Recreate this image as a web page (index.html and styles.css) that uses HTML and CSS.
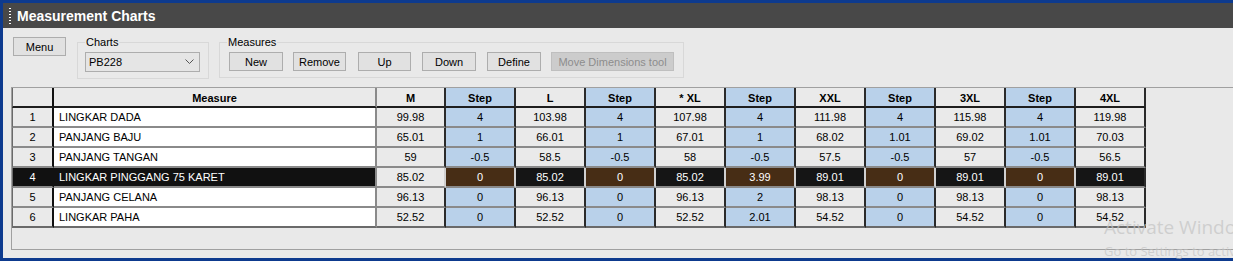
FILE: index.html
```html
<!DOCTYPE html>
<html lang="id">
<head>
  <meta charset="utf-8">
  <link rel="stylesheet" href="styles.css">
</head>
<body>
  <div class="window">
    <div class="titlebar">
      <span class="grip"></span>
      <span class="title">Measurement Charts</span>
    </div>
    <div class="content">
      <div class="toolbar">
        <button class="btn menu-btn">Menu</button>
        <fieldset class="group charts">
          <legend>Charts</legend>
          <div class="combo">
            <span>PB228</span>
            <svg width="9" height="6" viewBox="0 0 9 6"><path d="M0.5 0.5 L4.5 4.5 L8.5 0.5" fill="none" stroke="#555" stroke-width="1"/></svg>
          </div>
        </fieldset>
        <fieldset class="group measures">
          <legend>Measures</legend>
          <div class="btn-row">
            <button class="btn w54">New</button>
            <button class="btn w53 g10">Remove</button>
            <button class="btn w53 g12">Up</button>
            <button class="btn w54 g11">Down</button>
            <button class="btn w54 g11">Define</button>
            <button class="btn wide g10" disabled>Move Dimensions tool</button>
          </div>
        </fieldset>
      </div>

      <div class="grid-wrap">
        <table class="grid">
          <thead>
            <tr>
              <th class="c-no"></th>
              <th class="c-name">Measure</th>
              <th class="c-m">M</th>
              <th class="c-v step">Step</th>
              <th class="c-v">L</th>
              <th class="c-v step">Step</th>
              <th class="c-v">* XL</th>
              <th class="c-v step">Step</th>
              <th class="c-v">XXL</th>
              <th class="c-v step">Step</th>
              <th class="c-v">3XL</th>
              <th class="c-v step">Step</th>
              <th class="c-v">4XL</th>
            </tr>
          </thead>
          <tbody>
            <tr>
              <td class="no">1</td><td class="name">LINGKAR DADA</td><td class="m">99.98</td>
              <td class="step">4</td><td class="val">103.98</td><td class="step">4</td><td class="val">107.98</td>
              <td class="step">4</td><td class="val">111.98</td><td class="step">4</td><td class="val">115.98</td>
              <td class="step">4</td><td class="val">119.98</td>
            </tr>
            <tr>
              <td class="no">2</td><td class="name">PANJANG BAJU</td><td class="m">65.01</td>
              <td class="step">1</td><td class="val">66.01</td><td class="step">1</td><td class="val">67.01</td>
              <td class="step">1</td><td class="val">68.02</td><td class="step">1.01</td><td class="val">69.02</td>
              <td class="step">1.01</td><td class="val">70.03</td>
            </tr>
            <tr>
              <td class="no">3</td><td class="name">PANJANG TANGAN</td><td class="m">59</td>
              <td class="step">-0.5</td><td class="val">58.5</td><td class="step">-0.5</td><td class="val">58</td>
              <td class="step">-0.5</td><td class="val">57.5</td><td class="step">-0.5</td><td class="val">57</td>
              <td class="step">-0.5</td><td class="val">56.5</td>
            </tr>
            <tr class="selected">
              <td class="no">4</td><td class="name">LINGKAR PINGGANG 75 KARET</td><td class="m">85.02</td>
              <td class="step">0</td><td class="val">85.02</td><td class="step">0</td><td class="val">85.02</td>
              <td class="step">3.99</td><td class="val">89.01</td><td class="step">0</td><td class="val">89.01</td>
              <td class="step">0</td><td class="val">89.01</td>
            </tr>
            <tr>
              <td class="no">5</td><td class="name">PANJANG CELANA</td><td class="m">96.13</td>
              <td class="step">0</td><td class="val">96.13</td><td class="step">0</td><td class="val">96.13</td>
              <td class="step">2</td><td class="val">98.13</td><td class="step">0</td><td class="val">98.13</td>
              <td class="step">0</td><td class="val">98.13</td>
            </tr>
            <tr>
              <td class="no">6</td><td class="name">LINGKAR PAHA</td><td class="m">52.52</td>
              <td class="step">0</td><td class="val">52.52</td><td class="step">0</td><td class="val">52.52</td>
              <td class="step">2.01</td><td class="val">54.52</td><td class="step">0</td><td class="val">54.52</td>
              <td class="step">0</td><td class="val">54.52</td>
            </tr>
          </tbody>
        </table>
      </div>
    </div>
  </div>

  <div class="watermark">
    <div class="wm-big">Activate Windows</div>
    <div class="wm-small">Go to Settings to activate Windows.</div>
  </div>
</body>
</html>
```

FILE: styles.css
```css
html, body {
  margin: 0;
  padding: 0;
}
body {
  width: 1233px;
  height: 261px;
  overflow: hidden;
  background-color: #0d3a8e;
  font-family: "Liberation Sans", Arial, sans-serif;
  font-size: 11px;
  color: #000;
  position: relative;
}
.window {
  margin: 3px 0 0 3px;
  height: 255px;
  display: flex;
  flex-direction: column;
  background-color: #e9e9e9;
}
.titlebar {
  height: 25px;
  background-color: #484848;
  display: flex;
  align-items: center;
  flex-shrink: 0;
}
.grip {
  width: 2px;
  height: 16px;
  margin-left: 6px;
  margin-right: 6px;
  background-image: linear-gradient(#fff 50%, transparent 50%);
  background-size: 2px 3px;
}
.title {
  color: #fff;
  font-weight: bold;
  font-size: 14px;
}
.content {
  flex: 1;
  display: flex;
  flex-direction: column;
}
.toolbar {
  display: flex;
  align-items: flex-start;
  padding: 8px 0 0 10px;
  height: 44px;
}
.btn {
  font-family: "Liberation Sans", Arial, sans-serif;
  font-size: 11px;
  height: 19px;
  padding: 0;
  margin: 0;
  border: 1px solid #adadad;
  background-color: #e1e1e1;
  color: #000;
}
.btn:disabled {
  background-color: #cccccc;
  border-color: #bfbfbf;
  color: #8d8d8d;
}
.menu-btn {
  width: 53px;
  margin-top: 1px;
}
.group {
  margin: 0;
  padding: 3px 8px 6px 7px;
  border: 1px solid #d8d8d8;
  min-width: 0;
}
.group legend {
  padding: 0 1px;
  margin-left: 0;
  font-size: 11px;
  line-height: 13px;
}
.charts {
  margin-left: 11px;
  width: 115px;
}
.measures {
  margin-left: 10px;
  padding-left: 9px;
  padding-right: 9px;
}
.measures legend {
  margin-left: -2px;
}
.combo {
  height: 18px;
  border: 1px solid #adadad;
  background-color: #e5e5e5;
  display: flex;
  align-items: center;
  justify-content: space-between;
  padding: 0 5px 0 3px;
}
.btn-row {
  display: flex;
}
.w53 { width: 53px; }
.w54 { width: 54px; }
.wide { width: 123px; }
.g10 { margin-left: 10px; }
.g11 { margin-left: 11px; }
.g12 { margin-left: 12px; }

.grid-wrap {
  margin: 7px 0 0 8px;
  height: 161px;
  border: 1px solid #a0a0a0;
  border-right: none;
}
.grid {
  border-collapse: separate;
  border-spacing: 0;
  table-layout: fixed;
  width: 1134px;
}
.grid th, .grid td {
  box-sizing: border-box;
  padding: 0;
  height: 20px;
  line-height: 14px;
  vertical-align: top;
  padding-top: 2px;
  text-align: center;
  white-space: nowrap;
  overflow: hidden;
  border-right: 2px solid #2a2a2a;
  border-bottom: 2px solid #8a8a8a;
  background-color: #eaeaea;
}
.grid th {
  font-weight: bold;
  border-bottom-color: #1e1e1e;
  padding-top: 3px;
}
.grid th.step, .grid td.step {
  background-color: #b9d1ea;
}
.c-no { width: 42px; }
.c-name { width: 323px; }
.c-m { width: 69px; }
.c-v { width: 70px; }
.grid .c-no, .grid .no {
  border-left: 1px solid #6a6a6a;
  border-right-color: #111;
}
.grid .c-name, .grid .name {
  border-right-color: #8a8a8a;
}
.grid .name {
  background-color: #fff;
  text-align: left;
  padding-left: 5px;
}
.grid tbody tr:last-child td {
  border-bottom-color: #6a6a6a;
}
.selected td.no, .selected td.name {
  background-color: #111;
  color: #fff;
}
.selected td.step {
  background-color: #472d15;
  color: #fff;
  border-right-color: #d0d0d0;
}
.selected td.val {
  background-color: #151515;
  color: #fff;
  border-right-color: #d0d0d0;
}
.selected td.val:last-child {
  border-right-color: #2a2a2a;
}
.selected td.m {
  border-right-color: #d0d0d0;
}

.watermark {
  position: absolute;
  left: 1104px;
  top: 215px;
  font-family: "Open Sans", "Noto Sans", sans-serif;
  color: rgba(195, 195, 195, 0.7);
  white-space: nowrap;
}
.wm-big {
  font-size: 19px;
  line-height: 24px;
}
.wm-small {
  font-size: 13px;
  line-height: 18px;
  margin-top: 3px;
}
```
